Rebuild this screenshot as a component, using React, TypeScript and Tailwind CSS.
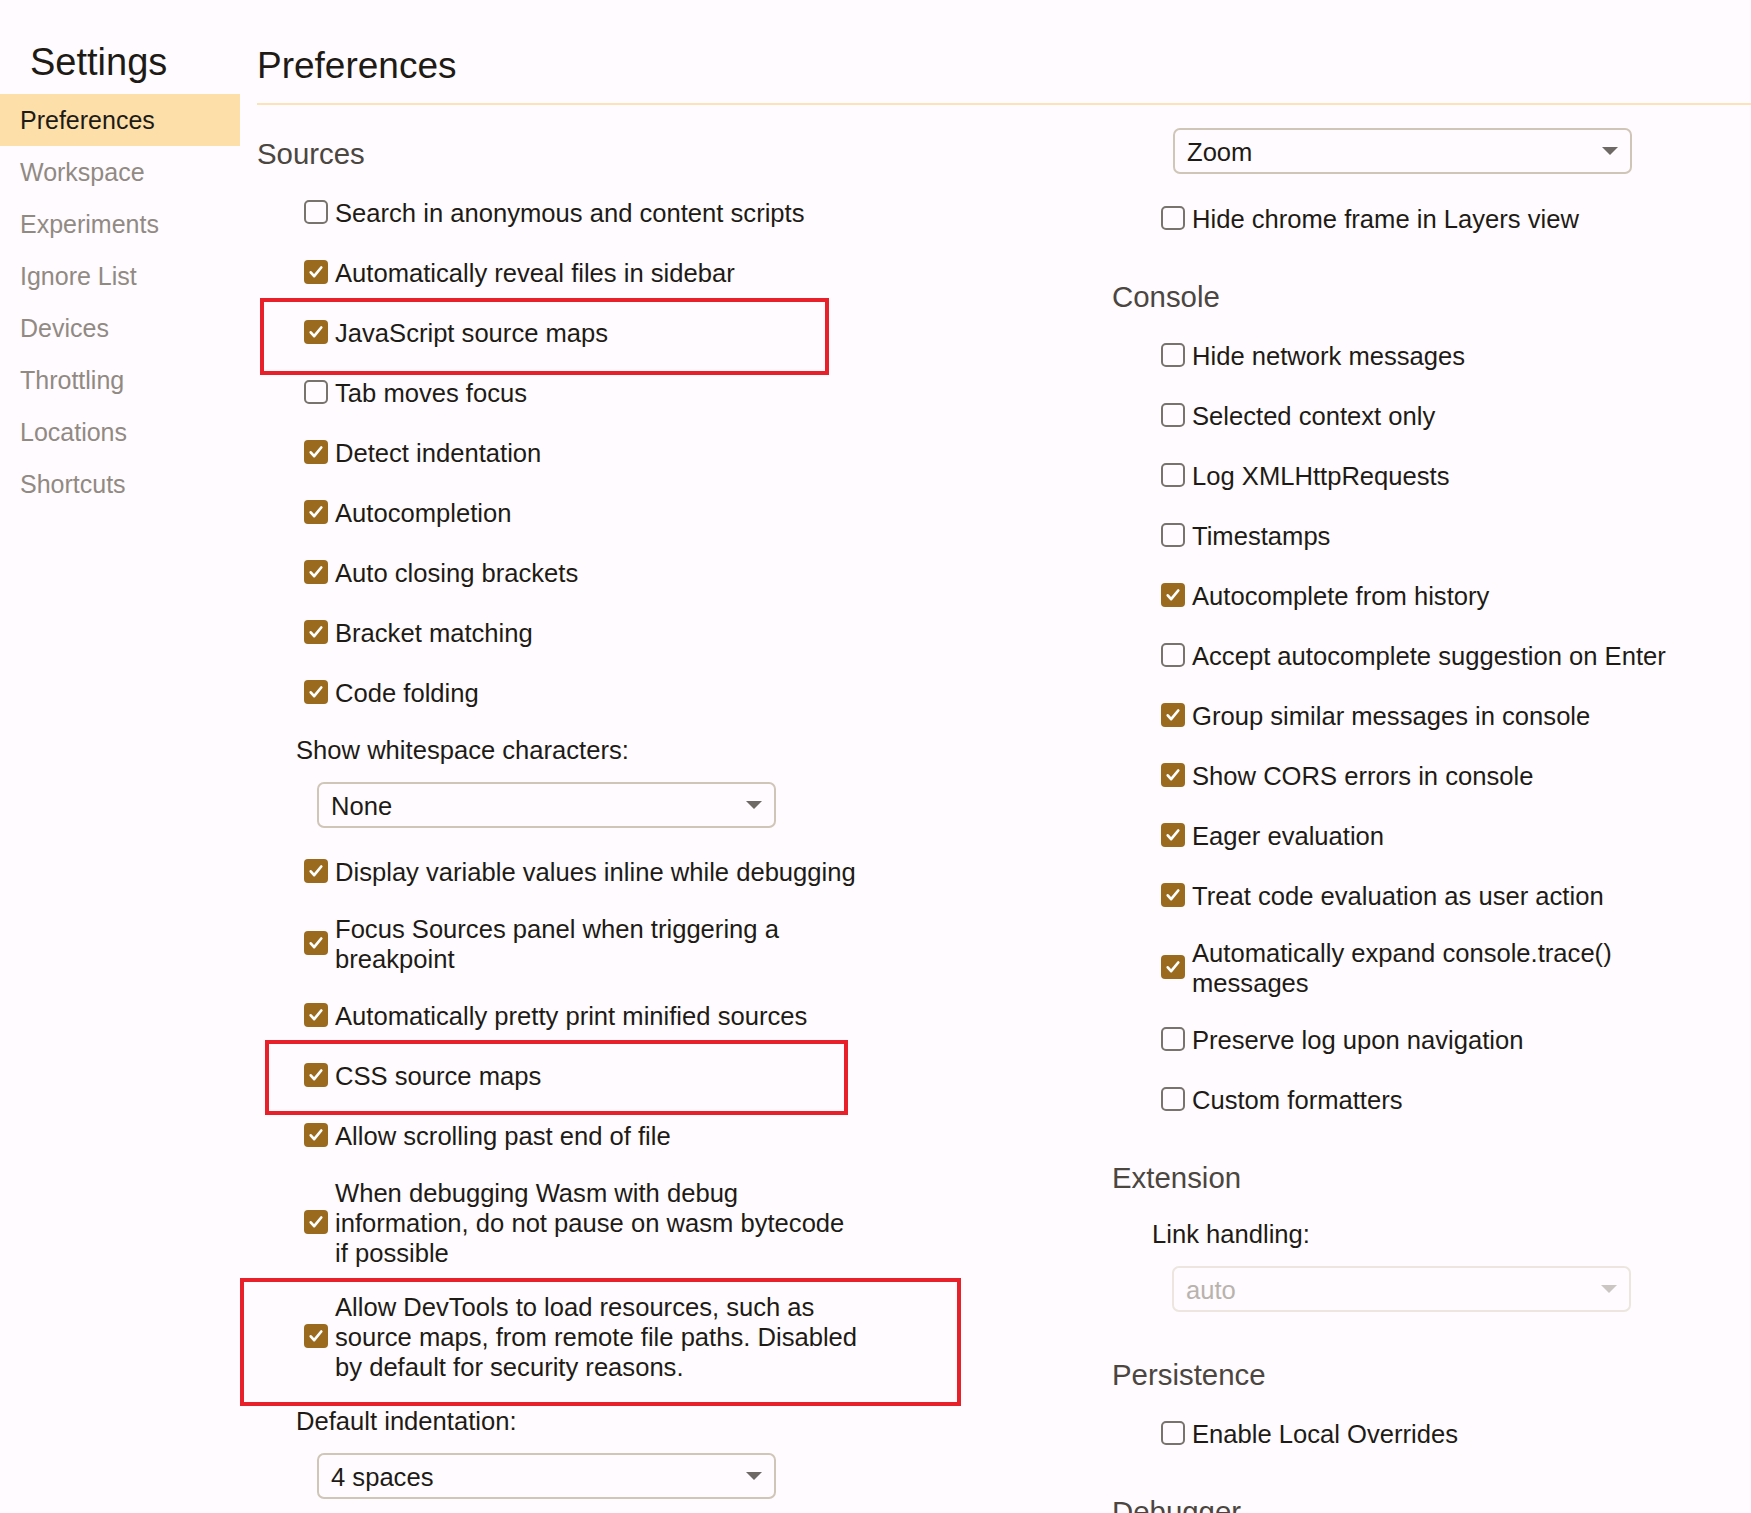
import React from 'react';

type Row = {
  label: React.ReactNode;
  checked: boolean;
  lines?: number;
  mark?: 'js' | 'css' | 'remote';
};

const sidebarItems = [
  'Preferences',
  'Workspace',
  'Experiments',
  'Ignore List',
  'Devices',
  'Throttling',
  'Locations',
  'Shortcuts',
];

function Checkbox({ checked }: { checked: boolean }) {
  if (!checked) {
    return <span className="block w-[24px] h-[24px] shrink-0 rounded-[5px] border-2 border-[#79736d]" />;
  }
  return (
    <span className="flex w-[24px] h-[24px] shrink-0 items-center justify-center rounded-[4px] bg-[#9a6b1f]">
      <svg className="w-[18px] h-[18px]" viewBox="0 0 24 24" fill="none" stroke="white" strokeWidth={3.6} strokeLinecap="round" strokeLinejoin="round">
        <path d="M5 12.5l4.5 5L19 6" />
      </svg>
    </span>
  );
}

// red annotation boxes drawn over some rows
const markBox = {
  js: 'left-[3px] top-[-4px] w-[569px] h-[77px]',
  css: 'left-[8px] top-[-5px] w-[583px] h-[75px]',
  remote: 'left-[-17px] top-[-1px] w-[721px] h-[128px]',
};

function CheckRow({ row, indent }: { row: Row; indent: string }) {
  const multi = (row.lines ?? 1) > 1;
  return (
    <div className={`relative flex items-center gap-[7px] ${indent} ${multi ? 'py-[12px]' : 'h-[60px]'}`}>
      <Checkbox checked={row.checked} />
      <span className="translate-y-[1px] text-[25.6px] leading-[30px] text-[#1e1b16]">{row.label}</span>
      {row.mark && (
        <div className={`absolute border-4 border-[#e8202a] pointer-events-none ${markBox[row.mark]}`} />
      )}
    </div>
  );
}

function Select({ value, disabled, className }: { value: string; disabled?: boolean; className: string }) {
  return (
    <div
      className={`flex h-[46px] w-[459px] items-center justify-between rounded-[7px] border-2 pl-[12px] pr-[12px] ${
        disabled ? 'border-[#ece6df] text-[#b9b3ad]' : 'border-[#cfc6b8] text-[#1e1b16]'
      } ${className}`}
    >
      <span className="translate-y-[1px] text-[25.6px] leading-[30px]">{value}</span>
      <svg className="w-[16px] h-[8px]" viewBox="0 0 16 8">
        <path d="M0 0h16L8 8z" fill={disabled ? '#cbc6c1' : '#6e6964'} />
      </svg>
    </div>
  );
}

function SectionTitle({ children, className = 'mt-[28px]' }: { children: React.ReactNode; className?: string }) {
  return (
    <h3 className={`h-[40px] mb-[9px] flex items-center pt-[2px] text-[29.4px] text-[#4b463f] ${className}`}>{children}</h3>
  );
}

function FieldLabel({ children, indent }: { children: React.ReactNode; indent: string }) {
  return <div className={`h-[54px] flex items-center pt-[2px] text-[25.6px] text-[#1e1b16] ${indent}`}>{children}</div>;
}

const sourcesTop: Row[] = [
  { label: 'Search in anonymous and content scripts', checked: false },
  { label: 'Automatically reveal files in sidebar', checked: true },
  { label: 'JavaScript source maps', checked: true, mark: 'js' },
  { label: 'Tab moves focus', checked: false },
  { label: 'Detect indentation', checked: true },
  { label: 'Autocompletion', checked: true },
  { label: 'Auto closing brackets', checked: true },
  { label: 'Bracket matching', checked: true },
  { label: 'Code folding', checked: true },
];

const sourcesBottom: Row[] = [
  { label: 'Display variable values inline while debugging', checked: true },
  { label: <>Focus Sources panel when triggering a<br />breakpoint</>, checked: true, lines: 2 },
  { label: 'Automatically pretty print minified sources', checked: true },
  { label: 'CSS source maps', checked: true, mark: 'css' },
  { label: 'Allow scrolling past end of file', checked: true },
  {
    label: <>When debugging Wasm with debug<br />information, do not pause on wasm bytecode<br />if possible</>,
    checked: true,
    lines: 3,
  },
  {
    label: <>Allow DevTools to load resources, such as<br />source maps, from remote file paths. Disabled<br />by default for security reasons.</>,
    checked: true,
    lines: 3,
    mark: 'remote',
  },
];

const consoleRows: Row[] = [
  { label: 'Hide network messages', checked: false },
  { label: 'Selected context only', checked: false },
  { label: 'Log XMLHttpRequests', checked: false },
  { label: 'Timestamps', checked: false },
  { label: 'Autocomplete from history', checked: true },
  { label: 'Accept autocomplete suggestion on Enter', checked: false },
  { label: 'Group similar messages in console', checked: true },
  { label: 'Show CORS errors in console', checked: true },
  { label: 'Eager evaluation', checked: true },
  { label: 'Treat code evaluation as user action', checked: true },
  { label: <>Automatically expand console.trace()<br />messages</>, checked: true, lines: 2 },
  { label: 'Preserve log upon navigation', checked: false },
  { label: 'Custom formatters', checked: false },
];

export default function App() {
  return (
    <div className="h-[1513px] overflow-hidden bg-[#fffbff] flex font-['Liberation_Sans',Arial,sans-serif]">
      {/* Sidebar */}
      <aside className="w-[240px] shrink-0">
        <h1 className="pt-[38px] mb-[8px] pl-[30px] text-[38px] leading-[48px] text-[#1e1b16]">Settings</h1>
        <nav>
          {sidebarItems.map((item, i) => (
            <div
              key={item}
              className={`h-[52px] flex items-center pl-[20px] pt-[2px] text-[25px] ${
                i === 0 ? 'bg-[#fddfaa] text-[#1e1b16]' : 'text-[#918a83]'
              }`}
            >
              {item}
            </div>
          ))}
        </nav>
      </aside>

      {/* Content */}
      <main className="flex-1 pl-[17px]">
        <h2 className="pt-[42px] text-[37px] leading-[48px] text-[#1e1b16]">Preferences</h2>
        <div className="mt-[13px] h-[2px] bg-[#fbe2b9]" />

        <div className="grid grid-cols-[855px_1fr]">
          {/* Left column */}
          <div>
            <SectionTitle>Sources</SectionTitle>
            {sourcesTop.map((row, i) => (
              <CheckRow key={i} row={row} indent="pl-[47px]" />
            ))}
            <FieldLabel indent="pl-[39px]">Show whitespace characters:</FieldLabel>
            <Select value="None" className="mt-[6px] ml-[60px] mb-[13px]" />
            {sourcesBottom.map((row, i) => (
              <CheckRow key={i} row={row} indent="pl-[47px]" />
            ))}
            <FieldLabel indent="pl-[39px]">Default indentation:</FieldLabel>
            <Select value="4 spaces" className="mt-[6px] ml-[60px]" />
          </div>

          {/* Right column */}
          <div>
            <Select value="Zoom" className="mt-[23px] ml-[61px] mb-[14px]" />
            <CheckRow row={{ label: 'Hide chrome frame in Layers view', checked: false }} indent="pl-[49px]" />

            <SectionTitle>Console</SectionTitle>
            {consoleRows.map((row, i) => (
              <CheckRow key={i} row={row} indent="pl-[49px]" />
            ))}

            <SectionTitle>Extension</SectionTitle>
            <FieldLabel indent="pl-[40px]">Link handling:</FieldLabel>
            <Select value="auto" disabled className="mt-[6px] ml-[60px]" />

            <SectionTitle className="mt-[42px]">Persistence</SectionTitle>
            <CheckRow row={{ label: 'Enable Local Overrides', checked: false }} indent="pl-[49px]" />

            <SectionTitle>Debugger</SectionTitle>
          </div>
        </div>
      </main>
    </div>
  );
}
